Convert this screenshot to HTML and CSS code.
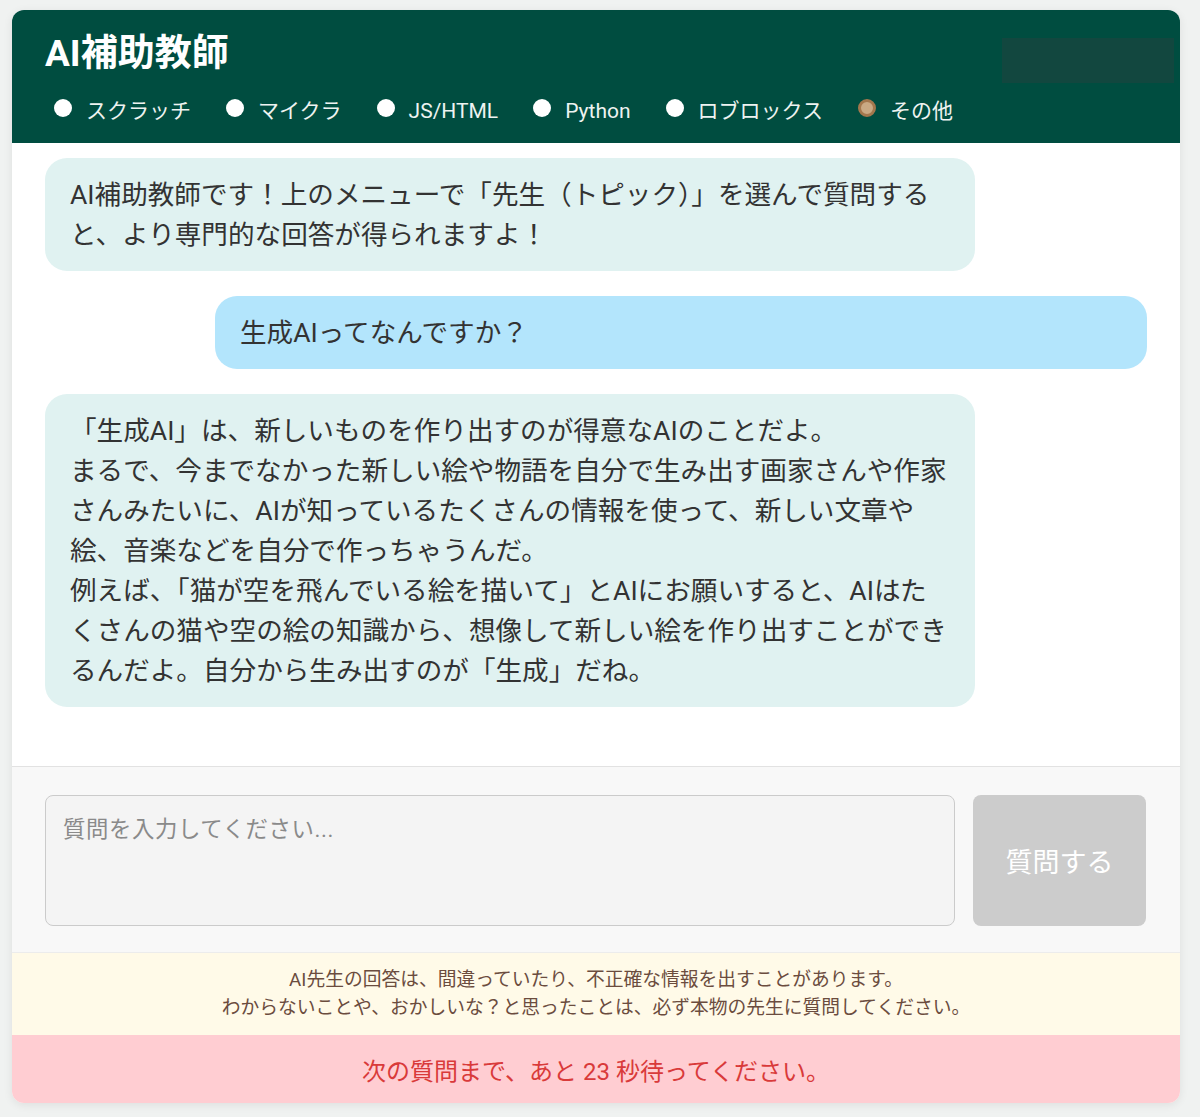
FILE: index.html
```html
<!DOCTYPE html>
<html lang="ja">
<head>
<meta charset="utf-8">
<title>AI補助教師</title>
<link rel="stylesheet" href="styles.css">
</head>
<body>
<div class="app">
  <header class="app-header">
    <div class="title-row">
      <h1 class="title">AI補助教師</h1>
      <div class="header-slot"></div>
    </div>
    <div class="topics">
      <label class="topic"><span class="dot"></span>スクラッチ</label>
      <label class="topic"><span class="dot"></span>マイクラ</label>
      <label class="topic"><span class="dot"></span>JS/HTML</label>
      <label class="topic"><span class="dot"></span>Python</label>
      <label class="topic"><span class="dot"></span>ロブロックス</label>
      <label class="topic"><span class="dot dot-on"></span>その他</label>
    </div>
  </header>

  <main class="chat">
    <div class="msg msg-bot">AI補助教師です！上のメニューで「先生（トピック）」を選んで質問すると、より専門的な回答が得られますよ！</div>
    <div class="msg msg-user">生成AIってなんですか？</div>
    <div class="msg msg-bot">「生成AI」は、新しいものを作り出すのが得意なAIのことだよ。<br>まるで、今までなかった新しい絵や物語を自分で生み出す画家さんや作家さんみたいに、AIが知っているたくさんの情報を使って、新しい文章や絵、音楽などを自分で作っちゃうんだ。<br>例えば、「猫が空を飛んでいる絵を描いて」とAIにお願いすると、AIはたくさんの猫や空の絵の知識から、想像して新しい絵を作り出すことができるんだよ。自分から生み出すのが「生成」だね。</div>
  </main>

  <form class="composer">
    <textarea class="question" placeholder="質問を入力してください..."></textarea>
    <button class="send" type="button" disabled>質問する</button>
  </form>

  <p class="notice">AI先生の回答は、間違っていたり、不正確な情報を出すことがあります。<br>わからないことや、おかしいな？と思ったことは、必ず本物の先生に質問してください。</p>

  <div class="cooldown">次の質問まで、あと 23 秒待ってください。</div>
</div>
</body>
</html>
```

FILE: styles.css
```css
* {
  box-sizing: border-box;
}

html,
body {
  margin: 0;
  background: #f0f2f1;
}

body {
  padding: 10px 20px 14px 12px;
  font-family: Roboto, "Noto Sans CJK JP", sans-serif;
  color: #333;
}

.app {
  width: 1168px;
  background: #fff;
  border-radius: 12px;
  overflow: hidden;
  box-shadow: 0 2px 10px rgba(0, 0, 0, 0.08);
}

/* header */
.app-header {
  background: #004d40;
  padding: 22px 6px 17px 33px;
  color: #fff;
}

.title-row {
  display: flex;
  justify-content: space-between;
  align-items: flex-start;
}

.title {
  margin: 0;
  font-size: 37px;
  line-height: 44px;
  font-weight: 700;
}

.header-slot {
  margin-top: 6px;
  width: 172px;
  height: 45px;
  background: #12473f;
}

.topics {
  display: flex;
  align-items: center;
  gap: 35px;
  margin-top: 13px;
  padding-left: 9px;
}

.topic {
  display: flex;
  align-items: center;
  gap: 14px;
  font-size: 21px;
  line-height: 30px;
  color: #eef3f1;
}

.dot {
  width: 18px;
  height: 18px;
  border-radius: 50%;
  background: #fff;
  margin-top: -7px;
}

.dot-on {
  background: #c9a984;
  border: 3.5px solid #a3774d;
}

/* conversation */
.chat {
  height: 623px;
  overflow: auto;
  padding: 15px 33px;
  display: flex;
  flex-direction: column;
  gap: 25px;
}

.msg {
  width: 930px;
  padding: 17px 25px 16px;
  border-radius: 22px;
  font-size: 26.6px;
  line-height: 40px;
  color: #333;
}

.msg-bot {
  background: #e0f2f1;
  align-self: flex-start;
}

.msg-user {
  width: 932px;
  background: #b3e5fc;
  align-self: flex-end;
}

/* input area */
.composer {
  margin: 0;
  display: flex;
  gap: 18px;
  padding: 28px 34px 26px 33px;
  background: #f8f8f8;
  border-top: 1px solid #e2e2e2;
}

.question {
  flex: 1;
  height: 131px;
  resize: none;
  padding: 18px 17px;
  border: 1px solid #cbcbcb;
  border-radius: 8px;
  background: #f4f4f4;
  font-family: inherit;
  font-size: 22.4px;
  line-height: 30px;
  color: #333;
}

.question::placeholder {
  color: #8a8a8a;
  letter-spacing: 0.6px;
}

.send {
  width: 173px;
  height: 131px;
  border: none;
  border-radius: 8px;
  background: #cccccc;
  color: #fff;
  font-family: inherit;
  font-size: 27px;
}

/* footer notes */
.notice {
  margin: 0;
  padding: 13px 0 13px;
  background: #fffae8;
  border-top: 1px solid #ececec;
  text-align: center;
  font-size: 18.75px;
  line-height: 28px;
  color: #6b4c3e;
}

.cooldown {
  height: 68px;
  display: flex;
  align-items: center;
  justify-content: center;
  background: #ffcdd2;
  color: #d93a3a;
  font-size: 24px;
}
```
